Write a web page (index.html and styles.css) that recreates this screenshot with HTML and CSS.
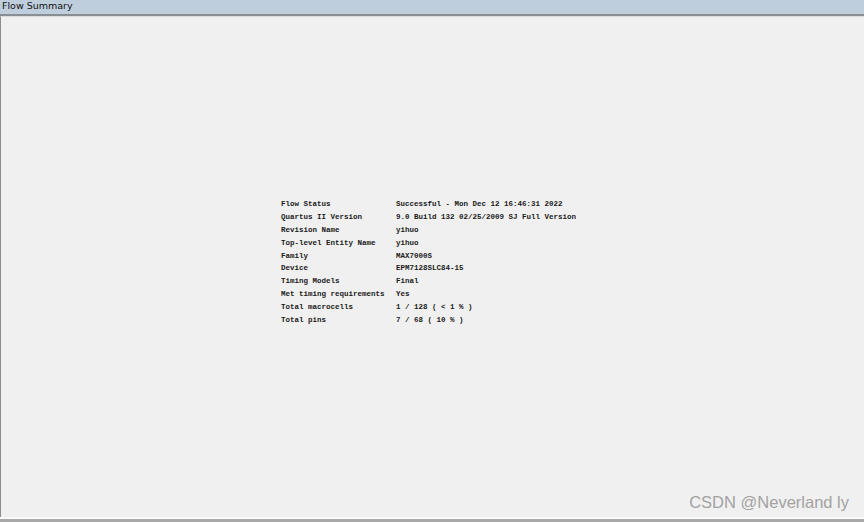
FILE: index.html
```html
<!DOCTYPE html>
<html lang="en">
<head>
    <meta charset="UTF-8">
    <title>Flow Summary</title>
    <link rel="stylesheet" href="styles.css">
</head>
<body>
    <div class="window">
        <!-- Title bar -->
        <div class="title-bar">Flow Summary</div>

        <!-- Report -->
        <div class="report">
            <div class="summary">
                <div class="label">Flow Status</div><div class="value">Successful - Mon Dec 12 16:46:31 2022</div>
                <div class="label">Quartus II Version</div><div class="value">9.0 Build 132 02/25/2009 SJ Full Version</div>
                <div class="label">Revision Name</div><div class="value">yihuo</div>
                <div class="label">Top-level Entity Name</div><div class="value">yihuo</div>
                <div class="label">Family</div><div class="value">MAX7000S</div>
                <div class="label">Device</div><div class="value">EPM7128SLC84-15</div>
                <div class="label">Timing Models</div><div class="value">Final</div>
                <div class="label">Met timing requirements</div><div class="value">Yes</div>
                <div class="label">Total macrocells</div><div class="value">1 / 128 ( &lt; 1 % )</div>
                <div class="label">Total pins</div><div class="value">7 / 68 ( 10 % )</div>
            </div>
            <div class="watermark">CSDN @Neverland ly</div>
        </div>

        <div class="bottom-edge"></div>
    </div>
</body>
</html>
```

FILE: styles.css
```css
/* Base */
body, html {
    margin: 0;
    padding: 0;
    height: 100%;
    background: #f0f0f0;
    overflow: hidden;
}

.window {
    height: 522px;
    display: flex;
    flex-direction: column;
}

/* Title bar */
.title-bar {
    height: 14px;
    line-height: 11px;
    padding-left: 2px;
    background: #bfcedc;
    border-bottom: 2px solid #8a8e93;
    font-family: 'Segoe UI', 'DejaVu Sans', sans-serif;
    font-size: 9.5px;
    color: #111;
}

/* Report area */
.report {
    position: relative;
    flex: 1;
    border-left: 1px solid #8c8c8c;
    border-top: 1px solid #dcdcdc;
    display: flex;
    justify-content: center;
    padding-top: 181px;
    padding-left: 280px;
}

.summary {
    display: grid;
    grid-template-columns: 115px auto;
    grid-auto-rows: 12.9px;
    align-content: start;
    width: 100%;
    font-family: 'Liberation Mono', 'DejaVu Sans Mono', monospace;
    font-size: 7.5px;
    font-weight: bold;
    color: #1a1a1a;
    white-space: pre;
}

.label, .value {
    line-height: 12.9px;
}

/* Watermark */
.watermark {
    position: absolute;
    right: 15px;
    bottom: 5px;
    font-family: 'Liberation Sans', Arial, sans-serif;
    font-size: 16.5px;
    color: #a2a2a2;
}

.bottom-edge {
    height: 2px;
    background: #fafafa;
    border-bottom: 3px solid #a8a8a8;
}
```
